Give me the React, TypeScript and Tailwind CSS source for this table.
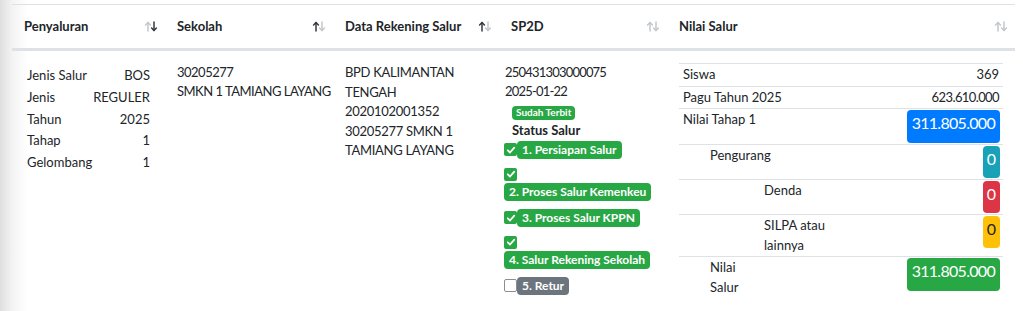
import React from 'react';

const font = { fontFamily: 'Lato, "Noto Sans", sans-serif' };

function SortIcon({ dir }: { dir: 'up' | 'down' | 'none' }) {
  const on = '#343a40';
  const off = '#c3c7cb';
  return (
    <svg width="14" height="11" viewBox="0 0 14 11" fill="none" strokeWidth="1.5" strokeLinecap="round" strokeLinejoin="round">
      <g stroke={dir === 'up' ? on : off}>
        <path d="M4 10V1.5" />
        <path d="M1.6 4L4 1.5L6.4 4" />
      </g>
      <g stroke={dir === 'down' ? on : off}>
        <path d="M10 1V9.5" />
        <path d="M7.6 7L10 9.5L12.4 7" />
      </g>
    </svg>
  );
}

function HeadCell({ label, dir }: { label: string; dir: 'up' | 'down' | 'none' }) {
  return (
    <div className="flex items-center justify-between pl-3 pr-[7px]">
      <span className="font-bold text-[13px] text-[#212529]">{label}</span>
      <SortIcon dir={dir} />
    </div>
  );
}

function Check({ checked }: { checked: boolean }) {
  if (!checked) {
    return <span className="inline-block w-[13px] h-[13px] rounded-[2px] border border-[#8a8f94] bg-white shrink-0" />;
  }
  return (
    <span className="inline-flex items-center justify-center w-[13px] h-[13px] rounded-[2px] bg-[#28a745] shrink-0">
      <svg width="10" height="10" viewBox="0 0 10 10" fill="none" stroke="white" strokeWidth="1.8" strokeLinecap="round" strokeLinejoin="round">
        <path d="M1.8 5.3L4 7.5L8.3 2.6" />
      </svg>
    </span>
  );
}

function StepBadge({ text, gray }: { text: string; gray?: boolean }) {
  return (
    <span
      className={`inline-flex items-center h-[18px] px-[5px] rounded-[4px] text-[12px] font-bold text-white whitespace-nowrap ${
        gray ? 'bg-[#6c757d]' : 'bg-[#28a745]'
      }`}
    >
      {text}
    </span>
  );
}

function Amount({ value, color, big }: { value: string; color: string; big?: boolean }) {
  return (
    <span
      className={`inline-flex justify-center rounded-[4px] pt-px text-[16px] leading-[24px] ${color} ${
        big ? 'h-[33px] px-[5px] tracking-[-0.7px]' : 'h-[32px] px-[4px]'
      }`}
    >
      {value}
    </span>
  );
}

const penyaluran = [
  ['Jenis Salur', 'BOS'],
  ['Jenis', 'REGULER'],
  ['Tahun', '2025'],
  ['Tahap', '1'],
  ['Gelombang', '1'],
];

export default function App() {
  return (
    <div
      className="min-h-[311px] w-[1023px] bg-[linear-gradient(to_right,#dedede_0px,#f3f3f3_12px,#ffffff_28px)] pt-1 text-[13px] leading-[19.5px] text-[#212529]"
      style={font}
    >
      <div className="ml-3 w-[1003px]">
        <div className="grid grid-cols-[153px_168px_166px_168px_348px] h-[47px] border-t border-[#dee2e6] border-b-[3px]">
          <HeadCell label="Penyaluran" dir="down" />
          <HeadCell label="Sekolah" dir="up" />
          <HeadCell label="Data Rekening Salur" dir="up" />
          <HeadCell label="SP2D" dir="none" />
          <HeadCell label="Nilai Salur" dir="none" />
        </div>

        <div className="grid grid-cols-[153px_168px_166px_168px_348px] pt-3">
          <div className="px-3 pt-[2px]">
            {penyaluran.map(([k, v]) => (
              <div key={k} className="flex justify-between px-[3px] py-px leading-[19.8px]">
                <span>{k}</span>
                <span>{v}</span>
              </div>
            ))}
          </div>

          <div className="pl-3 leading-[19px] whitespace-nowrap tracking-[-0.5px]">
            <div>30205277</div>
            <div>SMKN 1 TAMIANG LAYANG</div>
          </div>

          <div className="px-3 pr-6 leading-[19.5px] tracking-[-0.3px]">
            BPD KALIMANTAN TENGAH
            <br />
            2020102001352
            <br />
            30205277 SMKN 1 TAMIANG LAYANG
          </div>

          <div className="pl-[6px]">
            <div className="leading-[19px] tracking-[-0.8px]">
              <div>250431303000075</div>
              <div>2025-01-22</div>
            </div>
            <div className="ml-[7px] mt-[5px] flex">
              <span className="inline-flex items-center h-[14px] px-[4px] rounded-[4px] bg-[#28a745] text-white text-[10px] font-bold">
                Sudah Terbit
              </span>
            </div>
            <div className="ml-[7px] mt-[1px] font-bold">Status Salur</div>
            <div className="flex flex-col gap-2 -ml-px">
              <div className="flex items-center">
                <Check checked />
                <StepBadge text="1. Persiapan Salur" />
              </div>
              <div className="flex flex-col items-start gap-[2px] pt-px">
                <Check checked />
                <StepBadge text="2. Proses Salur Kemenkeu" />
              </div>
              <div className="flex items-center">
                <Check checked />
                <StepBadge text="3. Proses Salur KPPN" />
              </div>
              <div className="flex flex-col items-start gap-[2px] pt-px">
                <Check checked />
                <StepBadge text="4. Salur Rekening Sekolah" />
              </div>
              <div className="flex items-center">
                <Check checked={false} />
                <StepBadge text="5. Retur" gray />
              </div>
            </div>
          </div>

          <div className="px-3">
            <div className="border-t border-[#dee2e6]">
              <div className="flex justify-between px-1 py-px border-b border-[#dee2e6]">
                <span>Siswa</span>
                <span>369</span>
              </div>
              <div className="flex justify-between px-1 py-px border-b border-[#dee2e6]">
                <span>Pagu Tahun 2025</span>
                <span className="tracking-[-0.6px]">623.610.000</span>
              </div>
              <div className="flex items-start justify-between pl-1 pr-[3px] py-px border-b border-[#dee2e6]">
                <span>Nilai Tahap 1</span>
                <Amount value="311.805.000" color="bg-[#007bff] text-white" big />
              </div>
              <div className="flex items-start justify-between pl-[31px] pr-[3px] py-px border-b border-[#dee2e6]">
                <span>Pengurang</span>
                <Amount value="0" color="bg-[#17a2b8] text-white" />
              </div>
              <div className="flex items-start justify-between pl-[85px] pr-[3px] py-px border-b border-[#dee2e6]">
                <span className="w-[70px]">Denda</span>
                <Amount value="0" color="bg-[#dc3545] text-white" />
              </div>
              <div className="flex items-start justify-between pl-[85px] pr-[3px] py-px border-b border-[#dee2e6]">
                <span className="w-[70px]">SILPA atau lainnya</span>
                <Amount value="0" color="bg-[#ffc107] text-[#212529]" />
              </div>
              <div className="flex items-start justify-between pl-[31px] pr-[3px] py-px">
                <span className="w-[40px]">Nilai Salur</span>
                <Amount value="311.805.000" color="bg-[#28a745] text-white" big />
              </div>
            </div>
          </div>
        </div>
      </div>
    </div>
  );
}
